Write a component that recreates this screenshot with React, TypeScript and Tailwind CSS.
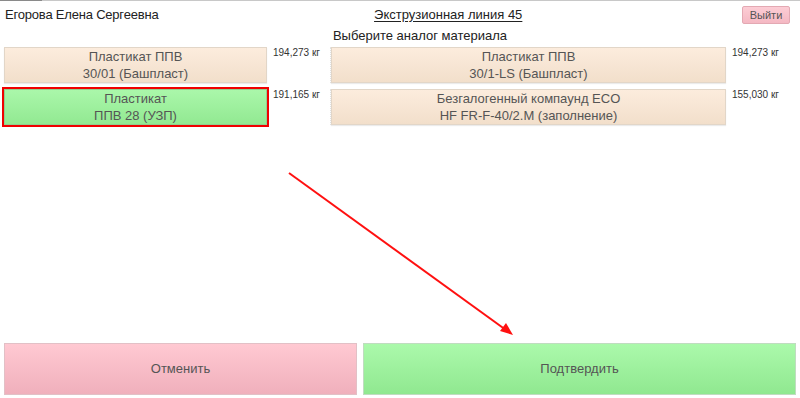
import React from 'react';

interface Material {
  line1: string;
  line2: string;
  weight: string;
  selected?: boolean;
}

const rows: Material[][] = [
  [
    { line1: 'Пластикат ППВ', line2: '30/01 (Башпласт)', weight: '194,273 кг' },
    { line1: 'Пластикат ППВ', line2: '30/1-LS (Башпласт)', weight: '194,273 кг' },
  ],
  [
    { line1: 'Пластикат', line2: 'ППВ 28 (УЗП)', weight: '191,165 кг', selected: true },
    { line1: 'Безгалогенный компаунд ECO', line2: 'HF FR-F-40/2.M (заполнение)', weight: '155,030 кг' },
  ],
];

const MaterialButton: React.FC<{ m: Material }> = ({ m }) => (
  <button
    className={
      m.selected
        ? 'flex h-full w-full flex-col items-center justify-center border border-[#8fd08f] bg-gradient-to-b from-[#aaf7aa] to-[#92e992] text-[13px] leading-[17px] text-[#555] outline-2 outline-[#f00000]'
        : 'flex h-full w-full flex-col items-center justify-center border border-[#e2d6c8] bg-gradient-to-b from-[#fcecdd] to-[#f2dfcb] text-[13px] leading-[17px] text-[#555] shadow-[0_1px_1px_rgba(0,0,0,0.08)]'
    }
  >
    <span>{m.line1}</span>
    <span>{m.line2}</span>
  </button>
);

const App: React.FC = () => {
  return (
    <div className="relative flex h-[398px] w-[800px] flex-col overflow-hidden bg-white font-['Liberation_Sans',Arial,sans-serif]">
      {/* top rule */}
      <div className="flex h-px w-full bg-[#c8c8c8]">
        <div className="h-px w-[42px] bg-[#8a8a8a]" />
      </div>

      {/* header */}
      <div className="flex h-[27px] items-center pl-[5px] pr-[10px] text-[13px] text-[#222]">
        <span className="tracking-[-0.2px]">Егорова Елена Сергеевна</span>
        <span className="flex-1 pr-[4px] text-center underline underline-offset-2">Экструзионная линия 45</span>
        <button className="h-[18px] w-[48px] rounded-[2px] border border-[#e3a9b3] bg-gradient-to-b from-[#fccdd5] to-[#f4b8c3] text-[11px] leading-[16px] text-[#555]">
          Выйти
        </button>
      </div>

      <div className="pl-[40px] text-center text-[13px] leading-[16px] text-[#222]">Выберите аналог материала</div>

      {/* materials */}
      <div className="mt-[3px] grid grid-cols-[263px_64px_395px_1fr] grid-rows-[36px_36px] gap-y-[6px] pl-[4px]">
        {rows.map((row, ri) =>
          row.map((m, ci) => (
            <React.Fragment key={`${ri}-${ci}`}>
              <MaterialButton m={m} />
              <div
                className={
                  ci === 0
                    ? 'border-r border-dotted border-[#e4e4e4] pl-[6px] text-[10px] leading-[12px] text-[#333]'
                    : 'pl-[6px] text-[10px] leading-[12px] text-[#333]'
                }
              >
                {m.weight}
              </div>
            </React.Fragment>
          ))
        )}
      </div>

      {/* actions */}
      <div className="mt-auto flex gap-[6px] px-[4px] pb-[3px]">
        <button className="h-[52px] w-[353px] border border-[#e2c0c6] bg-gradient-to-b from-[#ffc9d2] to-[#f0b0bc] text-[13px] text-[#555]">
          Отменить
        </button>
        <button className="h-[52px] flex-1 border border-[#c0dcc0] bg-gradient-to-b from-[#abf9ab] to-[#90e890] text-[13px] text-[#555]">
          Подтвердить
        </button>
      </div>

      {/* annotation arrow */}
      <svg className="pointer-events-none absolute left-0 top-0" width="800" height="398" viewBox="0 0 800 398">
        <line x1="289" y1="173" x2="506" y2="330" stroke="#ff1010" strokeWidth="2" />
        <polygon points="513,335 500,331 506,323" fill="#ff1010" />
      </svg>
    </div>
  );
};

export default App;
